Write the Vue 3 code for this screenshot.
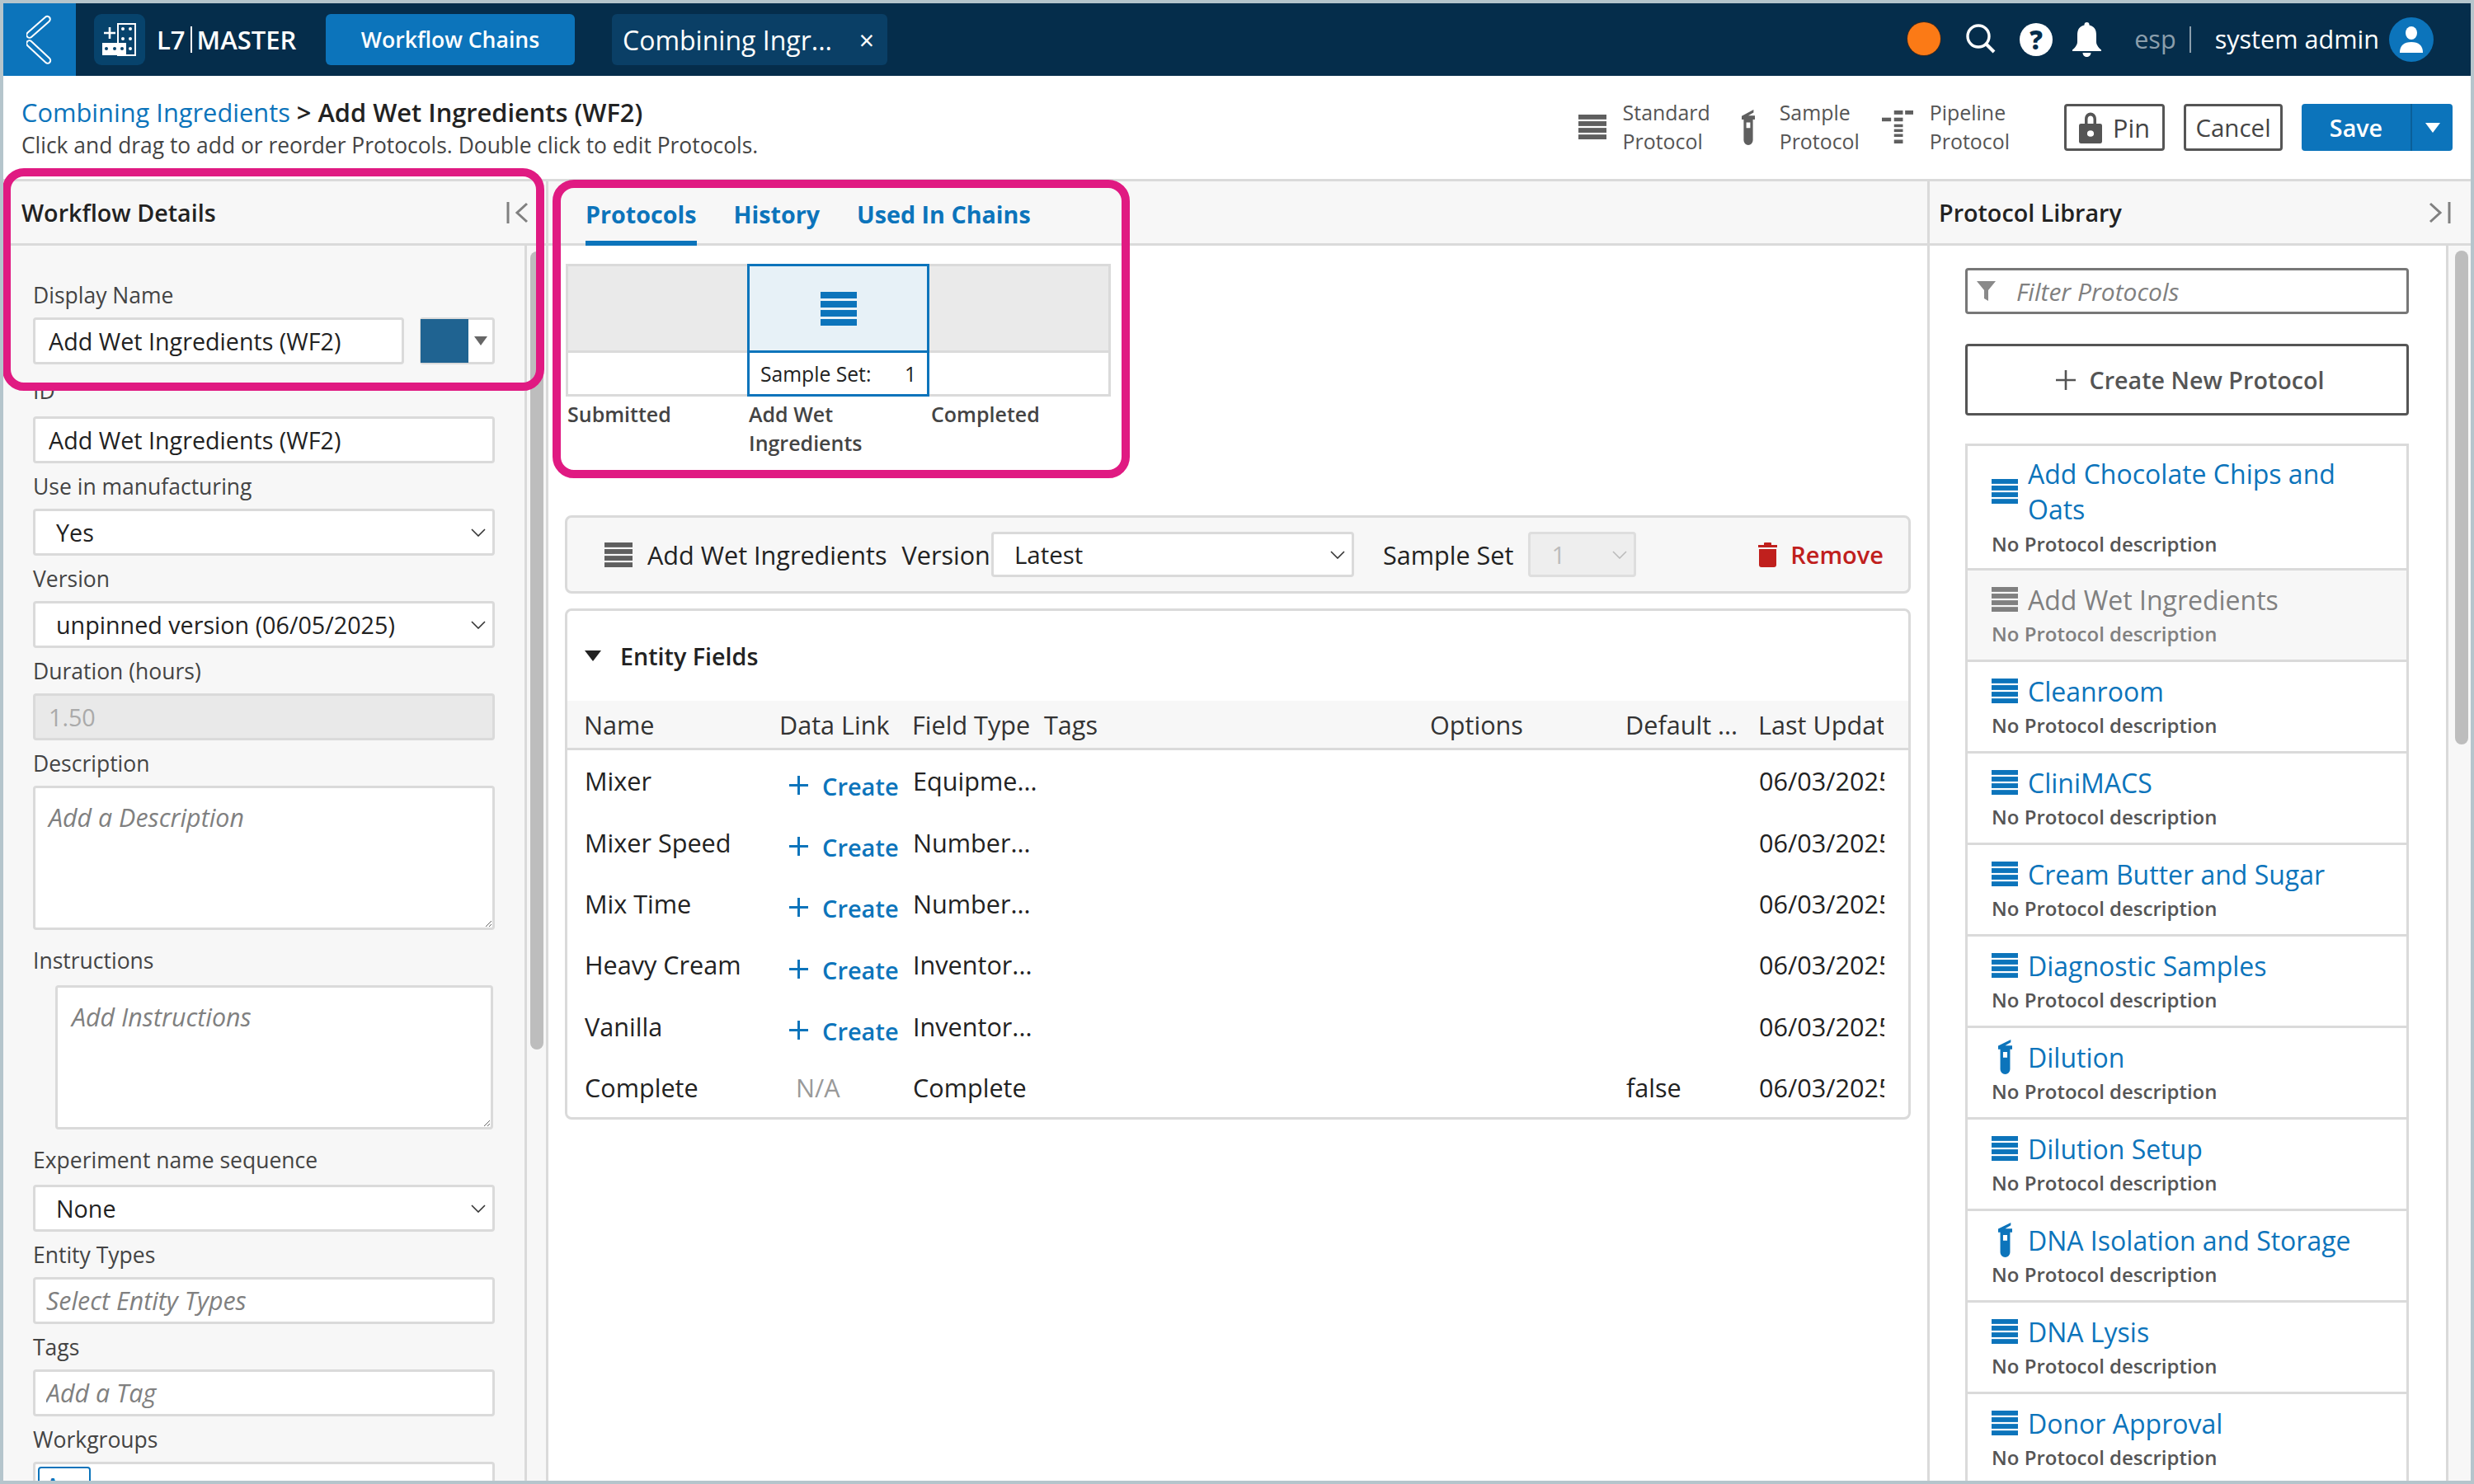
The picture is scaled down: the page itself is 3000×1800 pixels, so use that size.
<script setup>
const rows = [
  { name: 'Mixer', link: true, type: 'Equipme...', def: '' },
  { name: 'Mixer Speed', link: true, type: 'Number...', def: '' },
  { name: 'Mix Time', link: true, type: 'Number...', def: '' },
  { name: 'Heavy Cream', link: true, type: 'Inventor...', def: '' },
  { name: 'Vanilla', link: true, type: 'Inventor...', def: '' },
  { name: 'Complete', link: false, type: 'Complete', def: 'false' },
]

const protocols = [
  { name: 'Add Chocolate Chips and Oats', icon: 'stack' },
  { name: 'Add Wet Ingredients', icon: 'stack', used: true },
  { name: 'Cleanroom', icon: 'stack' },
  { name: 'CliniMACS', icon: 'stack' },
  { name: 'Cream Butter and Sugar', icon: 'stack' },
  { name: 'Diagnostic Samples', icon: 'stack' },
  { name: 'Dilution', icon: 'tube' },
  { name: 'Dilution Setup', icon: 'stack' },
  { name: 'DNA Isolation and Storage', icon: 'tube' },
  { name: 'DNA Lysis', icon: 'stack' },
  { name: 'Donor Approval', icon: 'stack' },
]
</script>

<template>
  <div class="app">
    <svg class="defs" width="0" height="0">
      <symbol id="stack" viewBox="0 0 44 41" preserveAspectRatio="none">
        <rect y="0" width="44" height="8" />
        <rect y="11" width="44" height="8" />
        <rect y="22" width="44" height="8" />
        <rect y="33" width="44" height="8" />
      </symbol>
      <symbol id="tube" viewBox="0 0 40 100" preserveAspectRatio="none">
        <path fill-rule="evenodd" d="M0 28V18L36 0V8L20 17H40V28ZM6 28H34V86A14 14 0 0 1 6 86ZM14 36V52H26V36Z" />
      </symbol>
      <symbol id="chev" viewBox="0 0 18 10">
        <path d="M1 1l8 8 8-8" fill="none" stroke="currentColor" stroke-width="1.6" />
      </symbol>
    </svg>

    <header class="topbar">
      <div class="back">
        <svg width="32" height="62" viewBox="0 0 32 62" fill="none" stroke-linecap="round">
          <path d="M25.3 6.3L3.7 25.3M3.7 35.7L25.7 56.3" stroke="#fff" stroke-width="9" />
          <path d="M25.3 6.3L3.7 25.3M3.7 35.7L25.7 56.3" stroke="#0c74bb" stroke-width="5" />
        </svg>
      </div>
      <div class="logo">
        <svg width="42" height="42" viewBox="0 0 42 42">
          <path d="M9 6v14M2 13h14" stroke="#fff" stroke-width="2.6" fill="none" />
          <rect x="19" y="2" width="21" height="38" fill="none" stroke="#fff" stroke-width="2" />
          <rect x="0" y="25" width="29" height="15" fill="#fff" />
          <g fill="#fff">
            <circle cx="25" cy="8" r="2" /><circle cx="34" cy="8" r="2" />
            <circle cx="25" cy="20" r="2" /><circle cx="34" cy="20" r="2" />
            <circle cx="34" cy="32" r="2" />
          </g>
          <g fill="#07436c">
            <circle cx="5" cy="32" r="2" /><circle cx="15" cy="32" r="2" /><circle cx="24" cy="32" r="2" />
          </g>
        </svg>
      </div>
      <div class="brand">L7<span class="pipe"></span>MASTER</div>
      <div class="nav-btn">Workflow Chains</div>
      <div class="nav-tab"><span>Combining Ingr...</span><span class="close">×</span></div>

      <div class="top-right">
        <span class="status"></span>
        <svg class="search" width="36" height="36" viewBox="0 0 36 36">
          <circle cx="15" cy="15" r="13" fill="none" stroke="#fff" stroke-width="3.4" />
          <path d="M24.5 24.5L34 34" stroke="#fff" stroke-width="4" />
        </svg>
        <span class="help">?</span>
        <svg class="bell" width="35" height="42" viewBox="0 0 35 42">
          <circle cx="17.5" cy="3" r="3" fill="#fff" />
          <path fill="#fff" d="M17.5 3C8 4 6 9 6 16V24C6 28 2 32 0 33.5V35H35V33.5C33 32 29 28 29 24V16C29 9 27 4 17.5 3ZM12.5 37H22.5C22.5 40 20 42 17.5 42S12.5 40 12.5 37Z" />
        </svg>
        <span class="esp">esp</span>
        <span class="sep"></span>
        <span class="user">system admin</span>
        <span class="avatar">
          <svg width="30" height="32" viewBox="0 0 30 32">
            <ellipse cx="15" cy="8" rx="7" ry="8" fill="#fff" />
            <path d="M1 32c0-9 5-13 14-13s14 4 14 13Z" fill="#fff" />
          </svg>
        </span>
      </div>
    </header>

    <div class="subbar">
      <div class="crumbs">
        <div class="crumb"><a>Combining Ingredients</a> &gt; <span>Add Wet Ingredients (WF2)</span></div>
        <div class="hint">Click and drag to add or reorder Protocols. Double click to edit Protocols.</div>
      </div>
      <div class="actions">
        <div class="legend">
          <svg class="ic-stack"><use href="#stack" /></svg>
          <span>Standard<br />Protocol</span>
        </div>
        <div class="legend legend-sample">
          <svg class="ic-tube"><use href="#tube" /></svg>
          <span>Sample<br />Protocol</span>
        </div>
        <div class="legend legend-pipe">
          <svg class="ic-pipe" width="38" height="40" viewBox="0 0 85 115" preserveAspectRatio="none">
            <rect x="33" y="0" width="24" height="14" />
            <rect x="63" y="0" width="22" height="14" />
            <rect x="0" y="25" width="25" height="13" />
            <rect x="33" y="25" width="24" height="13" />
            <rect x="33" y="48" width="24" height="10" />
            <rect x="33" y="65" width="24" height="10" />
            <rect x="33" y="82" width="24" height="10" />
            <rect x="33" y="102" width="24" height="13" />
          </svg>
          <span>Pipeline<br />Protocol</span>
        </div>
        <button class="btn pin">
          <svg width="28" height="38" viewBox="0 0 24 35" preserveAspectRatio="none">
            <path fill-rule="evenodd" fill="#555" d="M6 13V8c0-10 12-10 12 0v5h-3V8c0-5-6-5-6 0v5ZM2 13h20a2 2 0 0 1 2 2v18a2 2 0 0 1-2 2H2a2 2 0 0 1-2-2V15a2 2 0 0 1 2-2ZM12 20.500a3.500 3.500 0 1 0 0 7 3.500 3.500 0 0 0 0-7Z" />
          </svg>
          Pin
        </button>
        <button class="btn cancel">Cancel</button>
        <div class="save">
          <span class="save-main">Save</span>
          <span class="save-drop"></span>
        </div>
      </div>
    </div>

    <div class="main">
      <aside class="left">
        <div class="panel-head">
          <span>Workflow Details</span>
          <svg class="collapse" width="28" height="26" viewBox="0 0 28 26">
            <path d="M2 0v26" stroke="#808080" stroke-width="3" />
            <path d="M25 2L13 13l12 11" stroke="#808080" stroke-width="3" fill="none" />
          </svg>
        </div>
        <div class="left-body">
          <div class="form">
            <label>Display Name</label>
            <div class="name-row">
              <input class="field" value="Add Wet Ingredients (WF2)" />
              <div class="swatch"><i></i><b></b></div>
            </div>
            <label class="id-label">ID</label>
            <input class="field" value="Add Wet Ingredients (WF2)" />
            <label>Use in manufacturing</label>
            <div class="select field">Yes<svg class="chev"><use href="#chev" /></svg></div>
            <label>Version</label>
            <div class="select field">unpinned version (06/05/2025)<svg class="chev"><use href="#chev" /></svg></div>
            <label>Duration (hours)</label>
            <input class="field disabled" value="1.50" disabled />
            <label>Description</label>
            <textarea class="area" placeholder="Add a Description"></textarea>
            <label class="gap">Instructions</label>
            <textarea class="area indent" placeholder="Add Instructions"></textarea>
            <label class="gap">Experiment name sequence</label>
            <div class="select field">None<svg class="chev"><use href="#chev" /></svg></div>
            <label>Entity Types</label>
            <input class="field ph" placeholder="Select Entity Types" />
            <label>Tags</label>
            <input class="field ph" placeholder="Add a Tag" />
            <label>Workgroups</label>
            <div class="field multi"><span class="chip">Any</span></div>
          </div>
          <div class="gutter"><div class="thumb left-thumb"></div></div>
        </div>
      </aside>

      <section class="center">
        <div class="tabs">
          <a class="tab active">Protocols</a>
          <a class="tab">History</a>
          <a class="tab">Used In Chains</a>
        </div>
        <div class="canvas">
          <div class="chain">
            <div class="step">
              <div class="step-top"></div>
              <div class="step-bottom"></div>
              <div class="step-name">Submitted</div>
            </div>
            <div class="step selected">
              <div class="step-top">
                <svg class="ic-big"><use href="#stack" /></svg>
              </div>
              <div class="step-bottom"><span>Sample Set:</span><span>1</span></div>
              <div class="step-name">Add Wet Ingredients</div>
            </div>
            <div class="step">
              <div class="step-top"></div>
              <div class="step-bottom"></div>
              <div class="step-name">Completed</div>
            </div>
          </div>

          <div class="card toolbar">
            <svg class="ic-stack tool-ic"><use href="#stack" /></svg>
            <span class="tool-name">Add Wet Ingredients</span>
            <span class="tool-label">Version</span>
            <div class="select tool-select">Latest<svg class="chev"><use href="#chev" /></svg></div>
            <span class="tool-label set">Sample Set</span>
            <div class="select set-select">1<svg class="chev"><use href="#chev" /></svg></div>
            <a class="remove">
              <svg width="23" height="30" viewBox="0 0 23 30">
                <path fill="#c0201d" d="M8 0h7a1 1 0 0 1 1 1v2h7v3H0V3h7V1a1 1 0 0 1 1-1ZM1 8h21v19a3 3 0 0 1-3 3H4a3 3 0 0 1-3-3Z" />
              </svg>
              Remove
            </a>
          </div>

          <div class="card fields">
            <div class="fields-title"><i class="caret"></i>Entity Fields</div>
            <div class="grid-row grid-head">
              <span>Name</span><span>Data Link</span><span>Field Type</span><span>Tags</span>
              <span>Options</span><span>Default ...</span><span class="clip">Last Updated</span>
            </div>
            <div class="grid-row" v-for="row in rows" :key="row.name">
              <span class="cell-name">{{ row.name }}</span>
              <span v-if="row.link" class="create">
                <svg width="23" height="23" viewBox="0 0 23 23"><path d="M11.5 0v23M0 11.5h23" stroke="currentColor" stroke-width="3" /></svg>
                Create
              </span>
              <span v-else class="na">N/A</span>
              <span class="cell-type">{{ row.type }}</span>
              <span></span>
              <span></span>
              <span>{{ row.def }}</span>
              <span class="clip date">06/03/2025</span>
            </div>
          </div>
        </div>
      </section>

      <aside class="right">
        <div class="panel-head">
          <span>Protocol Library</span>
          <svg class="collapse" width="28" height="26" viewBox="0 0 28 26">
            <path d="M26 0v26" stroke="#808080" stroke-width="3" />
            <path d="M3 2l12 11L3 24" stroke="#808080" stroke-width="3" fill="none" />
          </svg>
        </div>
        <div class="right-body">
          <div class="library">
            <div class="filter">
              <svg width="23" height="24" viewBox="0 0 23 24"><path fill="#8a8a8a" d="M0 0h23L14 11v13l-5-3V11Z" /></svg>
              <span>Filter Protocols</span>
            </div>
            <div class="create-new">
              <svg width="24" height="24" viewBox="0 0 24 24"><path d="M12 0v24M0 12h24" stroke="#555" stroke-width="2.6" /></svg>
              Create New Protocol
            </div>
            <div class="list">
              <div class="item" v-for="p in protocols" :key="p.name" :class="{ used: p.used }">
                <div class="item-title">
                  <svg v-if="p.icon === 'stack'" class="ic-item"><use href="#stack" /></svg>
                  <span v-else class="tube-wrap"><svg class="ic-item-tube"><use href="#tube" /></svg></span>
                  <span>{{ p.name }}</span>
                </div>
                <div class="item-desc">No Protocol description</div>
              </div>
            </div>
          </div>
          <div class="gutter right-gutter"><div class="thumb right-thumb"></div></div>
        </div>
      </aside>
    </div>

    <div class="ring ring-details"></div>
    <div class="ring ring-tabs"></div>
  </div>
</template>

<style>
body { margin: 0; }
</style>

<style scoped>
.app {
  position: relative;
  width: 3000px;
  height: 1800px;
  box-sizing: border-box;
  border: 4px solid #b5c5cc;
  display: flex;
  flex-direction: column;
  overflow: hidden;
  background: #fff;
  font-family: "Open Sans", sans-serif;
  font-size: 28.7px;
  color: #222;
}
.defs { position: absolute; }
svg { display: block; flex: none; }

/* top bar */
.topbar {
  height: 88px;
  background: #052d4b;
  display: flex;
  align-items: center;
  color: #fff;
}
.back {
  width: 88px;
  height: 88px;
  background: #0c74bb;
  display: flex;
  align-items: center;
  padding-left: 28px;
  box-sizing: border-box;
}
.logo {
  width: 62px;
  height: 62px;
  margin-left: 22px;
  background: #07436c;
  border-radius: 9px;
  display: flex;
  align-items: center;
  justify-content: center;
}
.brand {
  margin-left: 14px;
  font-size: 31px;
  font-weight: 600;
  display: flex;
  align-items: center;
  width: 205px;
}
.pipe {
  width: 2px;
  height: 32px;
  background: #fff;
  margin: 0 6px;
}
.nav-btn {
  width: 302px;
  height: 62px;
  background: #0c74bb;
  border-radius: 6px;
  display: flex;
  align-items: center;
  justify-content: center;
  font-size: 26.6px;
  font-weight: 600;
}
.nav-tab {
  margin-left: 45px;
  width: 334px;
  height: 62px;
  background: #0a3f66;
  border-radius: 6px;
  display: flex;
  align-items: center;
  justify-content: space-between;
  padding: 0 16px 0 13px;
  box-sizing: border-box;
  font-size: 32px;
  font-weight: 500;
}
.close { font-size: 32px; font-weight: 400; }
.top-right {
  margin-left: auto;
  display: flex;
  align-items: center;
  padding-right: 45px;
}
.status {
  width: 40px;
  height: 40px;
  border-radius: 50%;
  background: #fb7a16;
  box-shadow: 0 0 0 1px #3b2a20;
  margin-top: -2px;
}
.search { margin-left: 31px; margin-top: -2px; }
.help {
  margin-left: 29px;
  width: 40px;
  height: 40px;
  border-radius: 50%;
  background: #fff;
  color: #052d4b;
  font-weight: 800;
  font-size: 31px;
  line-height: 40px;
  text-align: center;
}
.bell { margin-left: 24px; }
.esp { margin-left: 40px; color: #8b9eac; font-size: 30.6px; margin-top: -2px; }
.sep { width: 2px; height: 32px; background: #8b9eac; margin: 0 29px 0 16px; }
.user { font-size: 30.6px; margin-top: -2px; }
.avatar {
  margin-left: 12px;
  width: 54px;
  height: 54px;
  border-radius: 50%;
  background: #0c74bb;
  display: flex;
  align-items: center;
  justify-content: center;
}

/* sub bar */
.subbar {
  height: 128px;
  box-sizing: border-box;
  border-bottom: 3px solid #dadada;
  display: flex;
  align-items: flex-start;
  justify-content: space-between;
  padding: 24px 22px 0 22px;
}
.crumb { font-size: 30.8px; font-weight: 600; line-height: 40px; }
.crumb a { color: #0c74bb; font-weight: 400; }
.hint { font-size: 26.4px; line-height: 40px; color: #444; }
.actions { display: flex; align-items: flex-start; padding-top: 10px; }
.legend {
  display: flex;
  align-items: center;
  font-size: 24.9px;
  line-height: 35px;
  color: #555;
  font-weight: 500;
  margin-top: -7px;
}
.legend span { margin-left: 20px; }
.legend-sample { margin-left: 38px; }
.legend-sample span { margin-left: 30px; }
.legend-pipe { margin-left: 27px; }
.legend-pipe span { margin-left: 20px; }
.ic-stack { width: 34px; height: 30px; fill: #5f5f5f; }
.ic-tube { width: 16px; height: 43px; fill: #5f5f5f; }
.ic-pipe { fill: #5f5f5f; }
.btn {
  height: 57px;
  box-sizing: border-box;
  background: #fff;
  border: 3px solid #555;
  border-radius: 4px;
  font: inherit;
  font-size: 29.5px;
  color: #444;
  display: flex;
  align-items: center;
  justify-content: center;
  padding: 0;
}
.pin { width: 122px; margin-left: 66px; gap: 13px; font-size: 30.6px; }
.cancel { width: 120px; margin-left: 23px; }
.save {
  margin-left: 23px;
  width: 183px;
  height: 57px;
  background: #0c74bb;
  border-radius: 4px;
  display: flex;
  color: #fff;
  font-size: 28.7px;
  font-weight: 600;
}
.save-main {
  width: 132px;
  border-right: 2px solid #0a5f99;
  display: flex;
  align-items: center;
  justify-content: center;
}
.save-drop {
  flex: 1;
  display: flex;
  align-items: center;
  justify-content: center;
}
.save-drop::before {
  content: "";
  border-left: 9px solid transparent;
  border-right: 9px solid transparent;
  border-top: 12px solid #fff;
}

/* panels */
.main { flex: 1; display: flex; min-height: 0; }
.left, .right {
  flex: none;
  display: flex;
  flex-direction: column;
}
.left { width: 658px; background: #f7f7f7; }
.right { width: 656px; }
.center {
  flex: 1;
  min-width: 0;
  border-left: 3px solid #dadada;
  border-right: 3px solid #dadada;
}
.panel-head {
  height: 78px;
  box-sizing: border-box;
  flex: none;
  background: #f7f7f7;
  border-bottom: 3px solid #dadada;
  display: flex;
  align-items: center;
  justify-content: space-between;
  padding: 0 20px 0 22px;
  font-size: 28.7px;
  font-weight: 600;
}
.right .panel-head { padding-left: 11px; padding-right: 24px; }

/* left form */
.left-body { flex: 1; min-height: 0; display: flex; }
.form {
  flex: 1;
  min-width: 0;
  padding: 32px 36px 0 36px;
  overflow: hidden;
}
.form label {
  display: flex;
  align-items: center;
  height: 55px;
  font-size: 26.5px;
  color: #444;
}
.form label.id-label { height: 63px; }
.form label.gap { height: 67px; padding-top: 6px; box-sizing: border-box; }
.field {
  display: block;
  width: 100%;
  height: 57px;
  box-sizing: border-box;
  border: 3px solid #dadada;
  border-radius: 4px;
  background: #fff;
  font: inherit;
  font-size: 28.7px;
  color: #222;
  padding: 0 16px;
  outline: none;
}
.ph { padding-left: 13px; font-size: 30.4px; }
input::placeholder, textarea::placeholder { color: #808080; font-style: italic; opacity: 1; }
.disabled { background: #e9e9e9; color: #aaa; }
.select {
  position: relative;
  display: flex;
  align-items: center;
  padding-left: 25px;
  background: #fff;
}
.chev { position: absolute; right: 8px; top: 50%; margin-top: -5px; width: 18px; height: 10px; color: #333; }
.name-row { display: flex; gap: 19px; }
.name-row .field { flex: 1; min-width: 0; }
.swatch {
  width: 91px;
  height: 57px;
  box-sizing: border-box;
  border: 3px solid #dadada;
  border-radius: 4px;
  background: #fff;
  display: flex;
  align-items: center;
}
.swatch i { width: 58px; height: 53px; background: #1f6391; margin-left: -2px; }
.swatch b {
  margin-left: 7px;
  border-left: 8px solid transparent;
  border-right: 8px solid transparent;
  border-top: 11px solid #666;
}
.area {
  display: block;
  width: 100%;
  height: 175px;
  box-sizing: border-box;
  border: 3px solid #dadada;
  border-radius: 4px;
  background: #fff;
  font: inherit;
  font-size: 30.4px;
  padding: 15px 16px;
  outline: none;
}
.area.indent { width: 531px; margin-left: 27px; padding-left: 17px; }
.multi { padding: 3px; height: 80px; }
.chip {
  display: block;
  width: 64px;
  height: 60px;
  box-sizing: border-box;
  border: 2px solid #0c74bb;
  border-radius: 4px;
  padding-top: 3px;
  color: #0c74bb;
  text-align: center;
  font-size: 24px;
  font-weight: 600;
}
.gutter {
  flex: none;
  width: 26px;
  box-sizing: border-box;
  border-left: 3px solid #dadada;
  padding: 7px 3px 0 4px;
}
.thumb { border-radius: 8px; background: #bdbdbd; width: 16px; }
.left-thumb { height: 968px; }

/* center */
.tabs {
  height: 78px;
  box-sizing: border-box;
  background: #f7f7f7;
  border-bottom: 3px solid #dadada;
  display: flex;
  padding-left: 45px;
  gap: 45px;
}
.tab {
  color: #0c74bb;
  font-weight: 700;
  font-size: 28.7px;
  height: 78px;
  box-sizing: border-box;
  line-height: 80px;
}
.tab.active { border-bottom: 6px solid #0c74bb; }
.canvas { padding: 22px 20px 0 20px; }
.chain { display: flex; width: 661px; margin-left: 1px; }
.step { width: 220px; font-weight: 600; color: #444; }
.step.selected { width: 221px; }
.step-top {
  height: 108px;
  box-sizing: border-box;
  background: #eaeaea;
  border-top: 3px solid #dadada;
  border-bottom: 3px solid #dadada;
  display: flex;
  align-items: center;
  justify-content: center;
}
.step-bottom {
  height: 53px;
  box-sizing: border-box;
  background: #fff;
  border-bottom: 3px solid #dadada;
}
.step:first-child .step-top, .step:first-child .step-bottom { border-left: 3px solid #dadada; }
.step:last-child .step-top, .step:last-child .step-bottom { border-right: 3px solid #dadada; }
.selected .step-top {
  background: #e7f1f7;
  border: 3px solid #0c74bb;
}
.selected .step-bottom {
  border: 3px solid #0c74bb;
  border-top: none;
  display: flex;
  align-items: center;
  justify-content: space-between;
  padding: 0 13px;
  font-size: 24.7px;
  font-weight: 500;
  color: #222;
}
.step-name {
  font-size: 25px;
  line-height: 35px;
  padding: 4px 40px 0 2px;
}
.ic-big { width: 44px; height: 41px; fill: #0c74bb; }
.card {
  border: 3px solid #dadada;
  border-radius: 8px;
  box-sizing: border-box;
}
.toolbar {
  margin-top: 70px;
  height: 95px;
  background: #f7f7f7;
  display: flex;
  align-items: center;
  padding-left: 45px;
  font-size: 30.6px;
}
.tool-name { margin-left: 18px; }
.tool-label { margin-left: 18px; }
.tool-label.set { margin-left: 35px; }
.tool-select {
  width: 440px;
  height: 55px;
  box-sizing: border-box;
  border: 3px solid #dadada;
  border-radius: 4px;
  margin-left: 1px;
  font-size: 29.5px;
}
.set-select {
  width: 131px;
  height: 55px;
  box-sizing: border-box;
  border: 3px solid #dedede;
  border-radius: 4px;
  margin-left: 18px;
  background: #eee;
  color: #bbb;
  font-size: 29.5px;
}
.set-select .chev { color: #bbb; }
.remove {
  margin-left: auto;
  margin-right: 30px;
  display: flex;
  align-items: center;
  gap: 16px;
  color: #c0201d;
  font-size: 29px;
  font-weight: 600;
}
.fields { margin-top: 18px; height: 620px; font-size: 30.6px; }
.fields-title {
  height: 109px;
  display: flex;
  align-items: center;
  padding-left: 21px;
  font-size: 28.7px;
  font-weight: 600;
}
.caret {
  border-left: 10px solid transparent;
  border-right: 10px solid transparent;
  border-top: 13px solid #222;
  margin-right: 23px;
}
.grid-row {
  display: grid;
  grid-template-columns: 237px 161px 160px 468px 237px 161px 152px;
  padding-left: 21px;
  height: 74.4px;
  align-items: center;
}
.grid-head {
  height: 60px;
  background: #f7f7f7;
  border-bottom: 3px solid #dadada;
  box-sizing: border-box;
  padding-left: 20px;
  color: #333;
}
.clip { overflow: hidden; white-space: nowrap; }
.create {
  display: flex;
  align-items: center;
  gap: 17px;
  color: #0c74bb;
  font-weight: 600;
  font-size: 29px;
  padding: 12px 0 0 11px;
}
.create svg { margin-top: -2px; }
.na { color: #999; padding-left: 19px; }

/* right */
.right-body { flex: 1; min-height: 0; display: flex; }
.library {
  flex: 1;
  min-width: 0;
  padding: 27px 45px 0 43px;
  overflow: hidden;
}
.filter {
  height: 56px;
  box-sizing: border-box;
  border: 3px solid #777;
  border-radius: 4px;
  display: flex;
  align-items: center;
  padding-left: 11px;
  color: #808080;
  font-size: 30px;
  font-style: italic;
}
.filter span { margin-left: 25px; }
.create-new {
  margin-top: 36px;
  height: 87px;
  box-sizing: border-box;
  border: 3px solid #555;
  border-radius: 4px;
  display: flex;
  align-items: center;
  justify-content: center;
  gap: 16px;
  padding-left: 8px;
  color: #555;
  font-weight: 600;
}
.list {
  margin-top: 34px;
  border: 3px solid #dadada;
  border-bottom: none;
}
.item {
  box-sizing: border-box;
  border-bottom: 3px solid #dadada;
  padding: 14px 20px 12.500px 29px;
}
.item:first-child { padding-top: 12px; padding-bottom: 11px; }
.item-title {
  display: flex;
  align-items: center;
  font-size: 32px;
  line-height: 43px;
  color: #0c74bb;
  font-weight: 500;
}
.item-title > span:last-child { flex: 1; }
.ic-item { width: 32px; height: 30px; fill: #0c74bb; margin-right: 12px; }
.tube-wrap { width: 32px; margin-right: 12px; display: flex; justify-content: center; }
.ic-item-tube { width: 17px; height: 42px; fill: #0c74bb; }
.item-desc { font-size: 24px; font-weight: 600; color: #555; line-height: 36px; margin-top: 2.500px; }
.used { background: #f7f7f7; }
.used .item-title, .used .item-desc { color: #808080; }
.used .ic-item { fill: #808080; }
.right-gutter { background: #f7f7f7; padding: 6px 0 0 8px; width: 30px; }
.right-thumb { height: 599px; }

/* highlight rings drawn over the page */
.ring {
  position: absolute;
  box-sizing: border-box;
  border: 10px solid #e01a82;
  border-radius: 26px;
  pointer-events: none;
}
.ring-details { left: -1px; top: 200px; width: 657px; height: 270px; }
.ring-tabs { left: 666px; top: 214px; width: 700px; height: 362px; }
</style>
